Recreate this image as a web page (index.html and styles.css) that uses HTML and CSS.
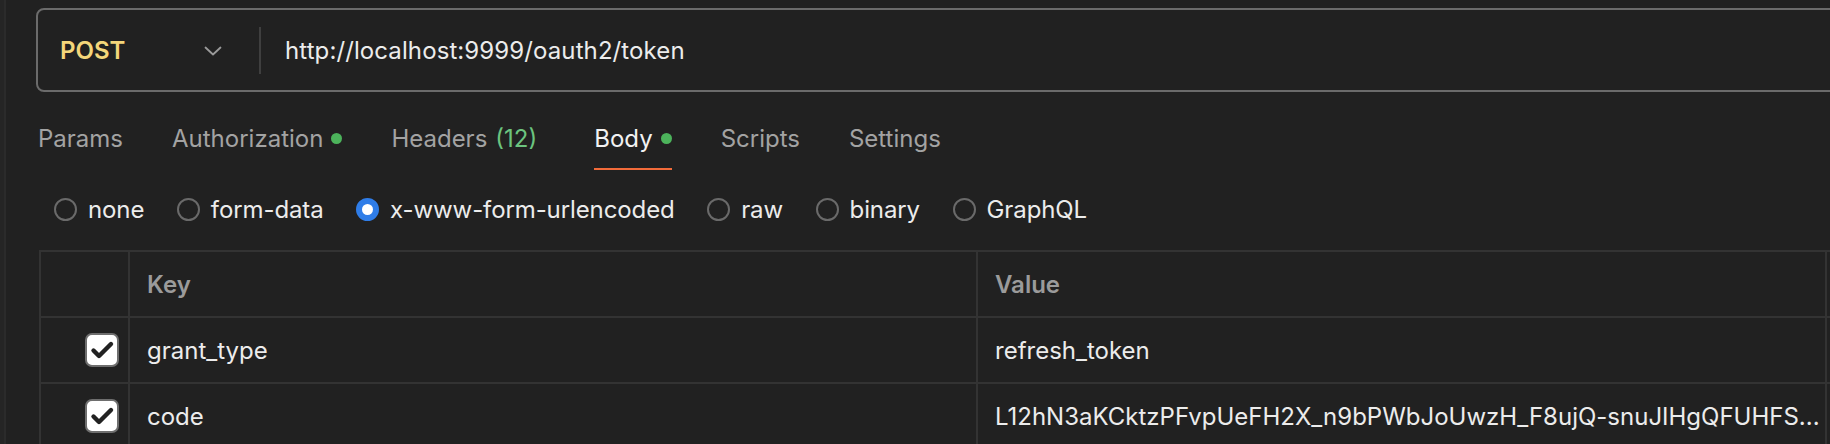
FILE: index.html
```html
<!DOCTYPE html>
<html lang="en">
<head>
  <meta charset="UTF-8" />
  <title>Request - POST token</title>
  <link rel="stylesheet" href="styles.css">
</head>
<body>
  <div class="app">
    <div class="rail"></div>

    <div class="main">
      <div class="urlbar">
        <div class="method">
          <span class="method-name">POST</span>
          <svg class="chevron" width="18" height="10" viewBox="0 0 18 10">
            <path d="M1.5 1.5 L9 8.5 L16.5 1.5" fill="none" stroke="#9a9a9a" stroke-width="1.8" stroke-linecap="round" stroke-linejoin="round" />
          </svg>
        </div>
        <div class="divider"></div>
        <div class="url">http://localhost:9999/oauth2/token</div>
      </div>

      <div class="tabs">
        <div class="tab">Params</div>
        <div class="tab">Authorization <span class="dot"></span></div>
        <div class="tab">Headers <span class="count">(12)</span></div>
        <div class="tab active">Body <span class="dot"></span></div>
        <div class="tab">Scripts</div>
        <div class="tab">Settings</div>
      </div>

      <div class="body-types">
        <label class="radio"><span class="circle"></span>none</label>
        <label class="radio"><span class="circle"></span>form-data</label>
        <label class="radio"><span class="circle checked"></span>x-www-form-urlencoded</label>
        <label class="radio"><span class="circle"></span>raw</label>
        <label class="radio"><span class="circle"></span>binary</label>
        <label class="radio"><span class="circle"></span>GraphQL</label>
      </div>

      <table class="params">
        <colgroup>
          <col class="c-check">
          <col class="c-key">
          <col class="c-value">
          <col class="c-desc">
        </colgroup>
        <tr class="head">
          <td></td>
          <td>Key</td>
          <td>Value</td>
          <td></td>
        </tr>
        <tr>
          <td class="check-cell"><span class="checkbox"><svg width="34" height="34" viewBox="0 0 34 34"><path d="M8.5 17.5 L14 23 L26 11" fill="none" stroke="#222" stroke-width="4.4" stroke-linecap="round" stroke-linejoin="round" /></svg></span></td>
          <td>grant_type</td>
          <td>refresh_token</td>
          <td></td>
        </tr>
        <tr>
          <td class="check-cell"><span class="checkbox"><svg width="34" height="34" viewBox="0 0 34 34"><path d="M8.5 17.5 L14 23 L26 11" fill="none" stroke="#222" stroke-width="4.4" stroke-linecap="round" stroke-linejoin="round" /></svg></span></td>
          <td>code</td>
          <td class="clip">L12hN3aKCktzPFvpUeFH2X_n9bPWbJoUwzH_F8ujQ-snuJIHgQFUHFS...</td>
          <td></td>
        </tr>
      </table>
    </div>
  </div>
</body>
</html>
```

FILE: styles.css
```css
html, body { margin: 0; padding: 0; background: #212121; overflow: hidden; }
body { font-family: Inter, "Noto Sans", sans-serif; font-size: 24px; color: #e8e8e8; }

.app { display: flex; height: 444px; }
.rail { width: 4px; background: #252525; border-right: 2px solid #2b2b2b; flex: none; }
.main { flex: none; width: 1900px; padding: 8px 0 0 30px; }

/* url bar */
.urlbar { display: flex; align-items: center; height: 80px; border: 2px solid #6b6b6b; border-radius: 8px; }
.method { width: 162px; padding: 0 37px 0 22px; display: flex; align-items: center; justify-content: space-between; }
.method-name { color: #f4d67a; font-weight: 600; }
.chevron { display: block; margin-top: 2px; }
.divider { width: 2px; height: 47px; background: #3f3f3f; }
.url { margin-left: 24px; color: #ececec; letter-spacing: 0.1px; }

/* tabs */
.tabs { display: flex; gap: 49px; margin-top: 32px; padding-left: 2px; }
.tab { line-height: 29px; padding-bottom: 15px; border-bottom: 2px solid transparent; color: #a3a3a3; display: flex; align-items: center; }
.tab.active { color: #f2f2f2; border-bottom-color: #f26b3a; }
.dot { width: 11px; height: 11px; border-radius: 50%; background: #4cb35b; margin-left: 8px; }
.count { color: #6cc47f; margin-left: 8px; margin-right: 8px; }

/* body type radios */
.body-types { display: flex; gap: 32.5px; margin-top: 25px; padding-left: 18px; line-height: 29px; }
.radio { display: flex; align-items: center; color: #ececec; letter-spacing: -0.1px; }
.circle { width: 19px; height: 19px; border: 2px solid #6a6a6a; border-radius: 50%; margin-right: 11px; box-sizing: content-box; }
.circle.checked { border-color: #2f7de8; background: #2f7de8; position: relative; }
.circle.checked::after { content: ""; position: absolute; left: 4px; top: 4px; width: 11px; height: 11px; border-radius: 50%; background: #fff; }

/* params table */
.params { margin-top: 26px; margin-left: 3px; border-collapse: collapse; table-layout: fixed; width: 1990px; }
.params td { border: 2px solid #333; height: 64px; padding: 0 17px; white-space: nowrap; overflow: hidden; color: #ececec; }
.params .head td { color: #9b9b9b; font-weight: 600; }
.c-check { width: 89px; }
.c-key { width: 848px; }
.c-value { width: 849px; }
.c-desc { width: 204px; }
.check-cell { text-align: right; padding-right: 9px !important; }
.checkbox { display: inline-block; vertical-align: middle; width: 30px; height: 30px; border: 2px solid #6e6e6e; border-radius: 7px; background: #fff; }
.checkbox svg { display: block; margin: -2px; }
.clip { text-overflow: clip; }
```
